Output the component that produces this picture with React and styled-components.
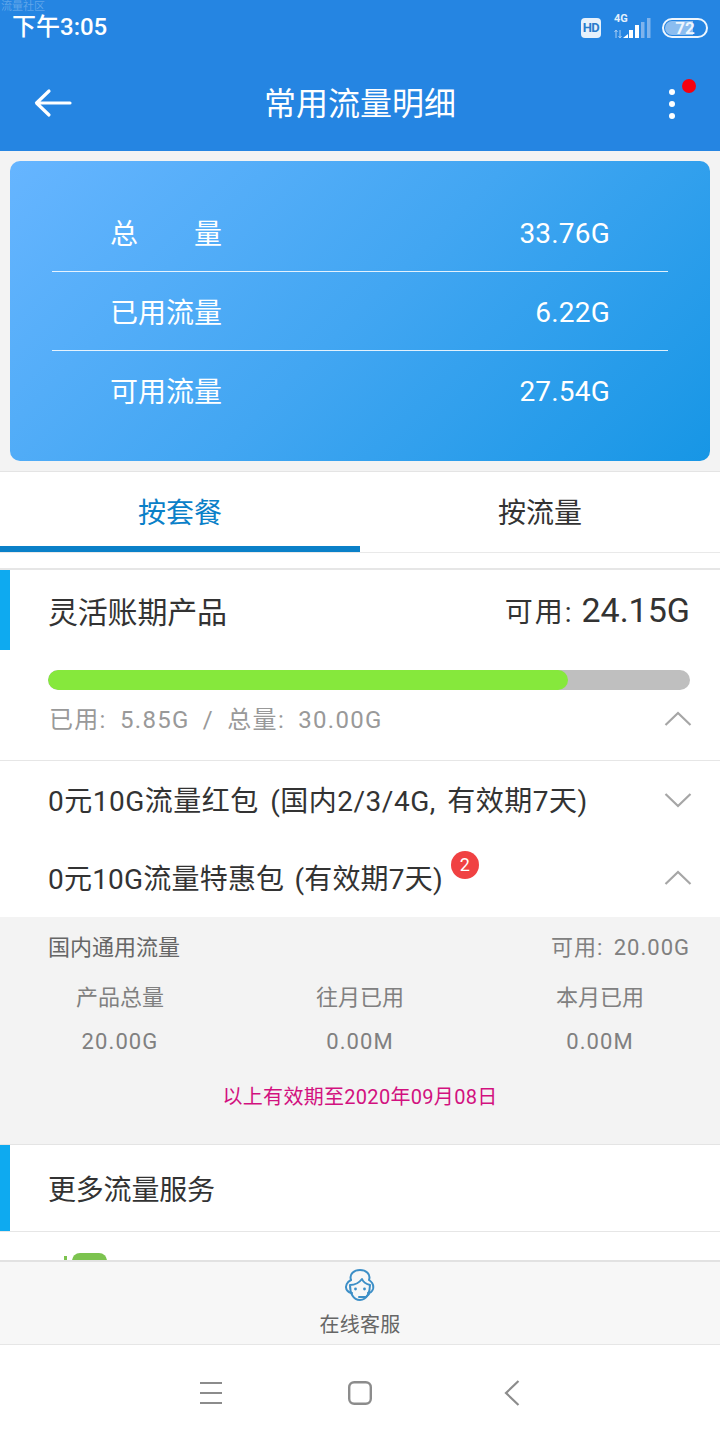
import React from "react";
import styled, { createGlobalStyle } from "styled-components";

const Global = createGlobalStyle`
  html, body { margin: 0; padding: 0; background: #fff; }
  * { box-sizing: border-box; }
  body { font-family: Roboto, "Noto Sans CJK SC", sans-serif; }
`;
const Page = styled.div`
  position: relative; width: 720px; height: 1440px; display: flex; flex-direction: column; overflow: hidden;
`;
const Header = styled.header`
  height: 151px; flex: none; background: #2585e2; color: #fff; display: flex; flex-direction: column; position: relative;
`;
const Watermark = styled.span`
  position: absolute; left: 1px; top: 0; font-size: 11px; line-height: 13px; color: rgba(255,255,255,.28);
`;
const StatusBar = styled.div`
  height: 55px; display: flex; align-items: center; justify-content: space-between; padding: 0 12px 0 12px;
`;
const Time = styled.span`
  font-size: 24px; font-weight: 500; line-height: 55px;
`;
const StatusIcons = styled.div`
  display: flex; align-items: center; gap: 11px;
`;
const HdBadge = styled.span`
  width: 20px; height: 20px; border-radius: 4px; background: #e6f1fc; color: #2a7ccc; font-size: 13px; font-weight: 700;
  display: flex; align-items: center; justify-content: center; letter-spacing: -0.5px; margin-right: 2px;
`;
const Signal = styled.div`
  position: relative; width: 37px; height: 24px;
`;
const SignalLabel = styled.span`
  position: absolute; left: 0; top: -3px; font-size: 11px; line-height: 12px; font-weight: 700; color: #e4f0fc;
`;
const Battery = styled.div`
  width: 46px; height: 20px; border: 2px solid #eef6fe; border-radius: 10px; padding: 1px; position: relative; overflow: hidden;
  display: flex; align-items: center; justify-content: center;
  font-size: 17px; font-weight: 700; color: #eef6fe;
  background: linear-gradient(90deg, #8bbdf0 0 70%, transparent 70%);
  background-clip: content-box;
`;
const TitleBar = styled.div`
  flex: 1; display: flex; align-items: center; justify-content: space-between; padding: 0 36px 0 34px; position: relative;
`;
const Title = styled.h1`
  position: absolute; left: 0; right: 0; margin: 0; text-align: center; font-size: 32px; font-weight: 400; line-height: 40px; top: 29px;
`;
const Dots = styled.div`
  position: relative; display: flex; flex-direction: column; gap: 6px; margin-top: 1px; margin-right: 9px;
`;
const Dot = styled.span`
  width: 6px; height: 6px; border-radius: 50%; background: #fff;
`;
const RedDot = styled.span`
  position: absolute; left: 13px; top: -10px; width: 14px; height: 14px; border-radius: 50%; background: #f5000f;
`;
const Summary = styled.section`
  height: 321px; flex: none; background: #f3f3f3; padding: 10px; border-bottom: 1px solid #e4e4e4;
`;
const Card = styled.div`
  height: 300px; border-radius: 10px; background: linear-gradient(135deg, #66b5ff 0%, #42a6f2 50%, #1796e5 100%);
  padding: 32px 42px 0; color: #fff;
`;
const CardRow = styled.div`
  height: 79px; display: flex; align-items: center; justify-content: space-between; padding: 4px 58px 0 58px;
  border-bottom: ${p => (p.$last ? "none" : "1px solid rgba(255,255,255,.85)")};
  font-size: 28px;
`;
const CardLabel = styled.span`
  display: flex; justify-content: space-between; width: 112px; margin-top: -5px;
`;
const CardValue = styled.span`
  letter-spacing: 0.2px; margin-top: -2px;
`;
const Tabs = styled.nav`
  height: 81px; flex: none; display: flex; background: #fff; border-bottom: 1px solid #e9e9e9;
`;
const Tab = styled.div`
  flex: 1; display: flex; align-items: center; justify-content: center; font-size: 28px; padding-top: 4px;
  color: ${p => (p.$active ? "#0a80c8" : "#333")};
  border-bottom: 6px solid ${p => (p.$active ? "#0a80c8" : "transparent")};
  height: 80px;
`;
const Content = styled.main`
  flex: 1; min-height: 0; overflow: hidden; background: #fff; padding-top: 15px;
`;
const SectionHead = styled.div`
  height: ${p => p.$h}px; display: flex; align-items: center; justify-content: space-between; padding: 0 30px 0 39px;
  border-left: 10px solid #0eaaf0; color: #333; font-size: ${p => p.$size}px;
`;
const SectionTitle = styled.span`
  margin-left: -1px; letter-spacing: -0.2px;
`;
const Bordered = styled.div`
  border-top: 2px solid #e6e6e6;
`;
const Avail = styled.span`
  display: flex; align-items: center; gap: 8px; font-size: 28px; letter-spacing: 2px;
`;
const AvailValue = styled.span`
  font-size: 34px; letter-spacing: 0;
`;
const Usage = styled.div`
  padding: 20px 30px 0 48px; height: 111px; border-bottom: 1px solid #e6e6e6;
`;
const Bar = styled.div`
  height: 20px; border-radius: 10px; background: #bfbfbf; overflow: hidden;
`;
const BarFill = styled.div`
  height: 100%; border-radius: 10px; background: #86e83c;
`;
const UsageText = styled.div`
  height: 58px; display: flex; align-items: center; justify-content: space-between; color: #999; font-size: 24px;
  letter-spacing: 1.3px; word-spacing: 6px;
`;
const UsageLabel = styled.span`
  margin-top: -4px; margin-left: 1px;
`;
const PackRow = styled.div`
  height: 78px; display: flex; align-items: center; justify-content: space-between; padding: 0 30px 0 48px;
  font-size: 28px; color: #333;
`;
const PackName = styled.span`
  position: relative; white-space: nowrap; margin-bottom: 3px;
  letter-spacing: ${p => (p.$wide ? "0.5px" : "0.2px")};
  word-spacing: ${p => (p.$wide ? "4px" : "3px")};
`;
const Badge = styled.span`
  position: absolute; right: -36px; top: -6px; width: 28px; height: 28px; border-radius: 50%; background: #f04142; color: #fff;
  font-size: 18px; display: flex; align-items: center; justify-content: center;
`;
const Detail = styled.div`
  height: 228px; background: #f3f3f3; padding: 0 30px 0 48px; border-bottom: 1px solid #e4e4e4; color: #666; font-size: 22px;
`;
const DetailHead = styled.div`
  height: 56px; display: flex; justify-content: space-between; align-items: center; color: #666;
`;
const DetailAvail = styled.span`
  color: #808080; letter-spacing: 1px; word-spacing: 4px;
`;
const StatGrid = styled.div`
  display: grid; grid-template-columns: repeat(3, 240px); margin-left: -48px; text-align: center; color: #808080;
`;
const StatCell = styled.div`
  height: 44px; display: flex; align-items: center; justify-content: center;
  letter-spacing: ${p => (p.$value ? "1.1px" : "0")};
  margin-top: ${p => (p.$value ? "2px" : "0")};
`;
const Expire = styled.div`
  margin-top: 19px; text-align: center; color: #d2117f; font-size: 20px; line-height: 30px; margin-left: -18px; letter-spacing: 0.3px;
`;
const MoreBody = styled.div`
  border-top: 1px solid #e6e6e6; padding: 21px 0 0 64px;
`;
const Footer = styled.div`
  height: 85px; flex: none; background: #f7f7f7; border-top: 2px solid #e2e2e2; border-bottom: 1px solid #e6e6e6;
  display: flex; flex-direction: column; align-items: center; padding-top: 6px; color: #666; font-size: 20px;
`;
const FooterLabel = styled.span`
  line-height: 28px; margin-top: 7px; letter-spacing: 0.2px;
`;
const NavBar = styled.div`
  height: 95px; flex: none; background: #fff; display: flex; align-items: center; padding-left: 200px; gap: 126px;
`;
const BackSlot = styled.span`
  display: flex; margin-left: 6px;
`;
const ChevronSvg = styled.svg`
  margin-right: -2px; flex: none;
`;

const Chevron = ({ up }) => (
  <ChevronSvg width="28" height="18" viewBox="0 0 28 18" fill="none" stroke="#a6a6a6" strokeWidth="2.2">
    <path d={up ? "M1.5 15 L14 3 L26.5 15" : "M1.5 3 L14 15 L26.5 3"} />
  </ChevronSvg>
);

const BarsSvg = styled.svg`
  position: absolute; left: 0; top: 0;
`;
const Bars = () => (
  <BarsSvg width="37" height="24" viewBox="0 0 37 24">
    <path d="M2 14v8M0.500 16 2 14 3.500 16M6 14v8M4.500 20 6 22 7.500 20" stroke="#a9cdf3" strokeWidth="1" fill="none" />
    <path d="M9 22l5-4v4z" fill="#fff" />
    <rect x="15" y="14" width="4" height="8" fill="#fff" />
    <rect x="21" y="9" width="4" height="13" fill="#fff" />
    <rect x="27" y="6" width="3.500" height="16" fill="#7fb3ec" />
    <rect x="33" y="2" width="3.500" height="20" fill="#7fb3ec" />
  </BarsSvg>
);

const FaceIcon = () => (
  <svg width="34" height="36" viewBox="0 0 34 36" fill="none" stroke="#3d8fc7" strokeWidth="2" strokeLinecap="round" strokeLinejoin="round">
    <path d="M8 12C6 6 11 2 17 2s11 4 9 10c3 2 5 5 4 9-1 3-3 4-5 4" />
    <path d="M8 12C4 14 2 18 3.500 21.500 5 24 7 25 9 25" />
    <path d="M7 17c5 0 9-2 12-6 1 3 4 5 8 6 0 7-3 15-10 15S7 25 7 17z" />
    <circle cx="12.500" cy="21" r="1.400" fill="#3d8fc7" stroke="none" />
    <circle cx="21.500" cy="21" r="1.400" fill="#3d8fc7" stroke="none" />
    <path d="M16 29h7l3-3" />
  </svg>
);

const Menu = () => (
  <svg width="22" height="24" viewBox="0 0 22 24" stroke="#8c8c8c" strokeWidth="2.200"><path d="M0 2h22M0 12h22M0 22h22" /></svg>
);
const Home = () => (
  <svg width="24" height="24" viewBox="0 0 24 24" fill="none" stroke="#8c8c8c" strokeWidth="2.400"><rect x="1.200" y="1.200" width="21.600" height="21.600" rx="5" /></svg>
);
const Back = () => (
  <svg width="16" height="26" viewBox="0 0 16 26" fill="none" stroke="#8c8c8c" strokeWidth="2.200"><path d="M14.500 1 2 13l12.500 12" /></svg>
);
const Arrow = () => (
  <svg width="38" height="30" viewBox="0 0 38 30" fill="none" stroke="#fff" strokeWidth="3.200" strokeLinecap="round" strokeLinejoin="round">
    <path d="M36 15H3M15 3 2.500 15 15 27" />
  </svg>
);
const ServiceIcon = () => (
  <svg width="46" height="30" viewBox="0 0 46 30" fill="#7cc34f">
    <rect x="0" y="3" width="3" height="6" />
    <rect x="8" y="0" width="35" height="30" rx="8" />
  </svg>
);

const rows = [["总量", "33.76G"], ["已用流量", "6.22G"], ["可用流量", "27.54G"]];

export default function App() {
  return (
    <Page>
      <Global />
      <Header>
        <Watermark>流量社区</Watermark>
        <StatusBar>
          <Time>下午3:05</Time>
          <StatusIcons>
            <HdBadge>HD</HdBadge>
            <Signal><SignalLabel>4G</SignalLabel><Bars /></Signal>
            <Battery>72</Battery>
          </StatusIcons>
        </StatusBar>
        <TitleBar>
          <Arrow />
          <Title>常用流量明细</Title>
          <Dots><RedDot /><Dot /><Dot /><Dot /></Dots>
        </TitleBar>
      </Header>
      <Summary>
        <Card>
          {rows.map(([k, v], i) => (
            <CardRow key={k} $last={i === 2}>
              <CardLabel>{i === 0 ? <><span>总</span><span>量</span></> : k}</CardLabel>
              <CardValue>{v}</CardValue>
            </CardRow>
          ))}
        </Card>
      </Summary>
      <Tabs>
        <Tab $active>按套餐</Tab>
        <Tab>按流量</Tab>
      </Tabs>
      <Content>
        <Bordered>
          <SectionHead $h={80} $size={30}>
            <SectionTitle>灵活账期产品</SectionTitle>
            <Avail>可用: <AvailValue>24.15G</AvailValue></Avail>
          </SectionHead>
        </Bordered>
        <Usage>
          <Bar><BarFill style={{ width: `${(520 / 642) * 100}%` }} /></Bar>
          <UsageText>
            <UsageLabel>已用: 5.85G / 总量: 30.00G</UsageLabel>
            <Chevron up />
          </UsageText>
        </Usage>
        <PackRow>
          <PackName $wide>0元10G流量红包 (国内2/3/4G, 有效期7天)</PackName>
          <Chevron />
        </PackRow>
        <PackRow>
          <PackName>0元10G流量特惠包 (有效期7天)<Badge>2</Badge></PackName>
          <Chevron up />
        </PackRow>
        <Detail>
          <DetailHead>
            <span>国内通用流量</span>
            <DetailAvail>可用: 20.00G</DetailAvail>
          </DetailHead>
          <StatGrid>
            <StatCell>产品总量</StatCell><StatCell>往月已用</StatCell><StatCell>本月已用</StatCell>
            <StatCell $value>20.00G</StatCell><StatCell $value>0.00M</StatCell><StatCell $value>0.00M</StatCell>
          </StatGrid>
          <Expire>以上有效期至2020年09月08日</Expire>
        </Detail>
        <SectionHead $h={86} $size={28}><SectionTitle>更多流量服务</SectionTitle></SectionHead>
        <MoreBody><ServiceIcon /></MoreBody>
      </Content>
      <Footer>
        <FaceIcon />
        <FooterLabel>在线客服</FooterLabel>
      </Footer>
      <NavBar>
        <Menu /><Home /><BackSlot><Back /></BackSlot>
      </NavBar>
    </Page>
  );
}
